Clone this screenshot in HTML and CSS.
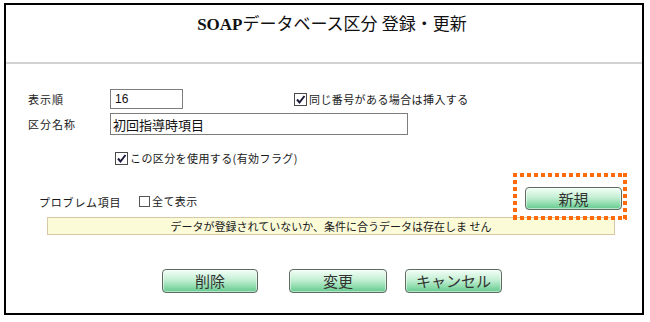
FILE: index.html
```html
<!DOCTYPE html>
<html lang="ja">
<head>
<meta charset="utf-8">
<title>SOAPデータベース区分 登録・更新</title>
<link rel="stylesheet" href="styles.css">
</head>
<body>
<div class="frame">
  <div class="header">
    <h1 class="title"><span class="title-en">SOAP</span>データベース区分 登録・更新</h1>
  </div>
  <div class="form">
    <div class="row row-order">
      <label class="label">表示順</label>
      <div class="field">
        <input class="input input-short" type="text" value="16">
        <span class="check check-insert"><span class="box checked"><svg viewBox="0 0 11 11" width="11" height="11"><path d="M2 5.5 L4.5 8.5 L9.5 2" fill="none" stroke="#1b1b3a" stroke-width="2"/></svg></span>同じ番号がある場合は挿入する</span>
      </div>
    </div>
    <div class="row row-name">
      <label class="label">区分名称</label>
      <div class="field">
        <input class="input input-long" type="text" value="初回指導時項目">
      </div>
    </div>
    <div class="row-flag">
      <span class="check"><span class="box checked"><svg viewBox="0 0 11 11" width="11" height="11"><path d="M2 5.5 L4.5 8.5 L9.5 2" fill="none" stroke="#1b1b3a" stroke-width="2"/></svg></span>この区分を使用する(有効フラグ)</span>
    </div>
    <div class="problem-row">
      <span class="problem-label">プロブレム項目</span>
      <span class="check check-all"><span class="box small"></span>全て表示</span>
      <span class="new-wrap">
        <button class="btn btn-new">新規</button>
        <span class="highlight"></span>
      </span>
    </div>
    <div class="message">データが登録されていないか、条件に合うデータは存在しま せん</div>
    <div class="actions">
      <button class="btn btn-delete">削除</button>
      <button class="btn btn-change">変更</button>
      <button class="btn btn-cancel">キャンセル</button>
    </div>
  </div>
</div>
</body>
</html>
```

FILE: styles.css
```css
* { box-sizing: border-box; }
html, body { margin: 0; padding: 0; background: #fff; }
body {
  font-family: "Noto Sans CJK JP", "Liberation Sans", sans-serif;
  color: #1a1a1a;
}
.frame {
  margin: 3px 0 0 4px;
  width: 640px;
  height: 312px;
  border: 2px solid #000;
}
.header {
  height: 59px;
  border-bottom: 2px solid #d2d2d2;
  display: flex;
  justify-content: center;
  padding: 10px 0 0 16px;
}
.title {
  margin: 0;
  font-size: 17px;
  line-height: 20px;
  font-weight: normal;
  font-family: "Liberation Serif", "Noto Sans CJK JP", serif;
  color: #111;
}
.title-en { font-weight: bold; }
.form {
  padding: 25px 20px 0 22px;
}
.row {
  display: grid;
  grid-template-columns: 82px 1fr;
  align-items: center;
}
.label {
  font-size: 11px;
  letter-spacing: 1px;
  line-height: 14px;
}
.field { display: flex; align-items: center; }
.row-order { height: 20px; }
.row-name { height: 22px; margin-top: 4px; }
.input {
  border: 1px solid #7d7d7d;
  background: #fff;
  padding: 0 4px;
  margin: 0;
  font-family: "Liberation Sans", "Noto Sans CJK JP", sans-serif;
  color: #111;
  outline: none;
}
.input-short { width: 73px; height: 20px; font-size: 12px; }
.input-long {
  width: 298px; height: 22px; font-size: 13px;
  font-family: "Noto Sans CJK JP", sans-serif;
  padding-left: 2px;
}
.check {
  display: inline-flex;
  align-items: center;
  font-size: 11px;
  letter-spacing: 0.4px;
  line-height: 14px;
  white-space: nowrap;
}
.box {
  width: 13px; height: 13px;
  border: 1px solid #4a4a4a;
  background: #fff;
  display: inline-flex;
  align-items: center;
  justify-content: center;
  margin-right: 2px;
}
.box.small { width: 11px; height: 11px; border-color: #555; margin-right: 2px; }
.check-insert { margin-left: 111px; }
.row-flag {
  margin-top: 15px;
  padding-left: 87px;
  height: 16px;
  display: flex;
  align-items: center;
}
.problem-row {
  margin-top: 21px;
  height: 23px;
  display: flex;
  align-items: flex-end;
}
.problem-label {
  margin-left: 11px;
  width: 100px;
  font-size: 11px;
  letter-spacing: 0.8px;
  line-height: 14px;
  position: relative;
  top: -1px;
}
.check-all { position: relative; top: -2px; }
.new-wrap {
  margin-left: auto;
  position: relative;
  display: block;
  height: 23px;
}
.btn {
  margin: 0;
  padding: 0;
  height: 24px;
  border: 1px solid #5f6a63;
  border-radius: 4px;
  background: linear-gradient(#f2fff6 0%, #c4efd4 45%, #8fdcad 75%, #63c98e 100%);
  font-family: "Noto Sans CJK JP", sans-serif;
  font-size: 15px;
  color: #333;
  line-height: 20px;
  box-shadow: inset 0 0 0 1px rgba(255,255,255,0.5);
}
.btn-new { width: 97px; height: 23px; display: block; }
.highlight {
  position: absolute;
  left: -12px;
  top: -14px;
  width: 114px;
  height: 47px;
  background:
    repeating-linear-gradient(90deg, #ff6a0c 0 4px, transparent 4px 7px) top left / 100% 4px no-repeat,
    repeating-linear-gradient(90deg, #ff6a0c 0 4px, transparent 4px 7px) bottom left / 100% 4px no-repeat,
    repeating-linear-gradient(180deg, #ff6a0c 0 4px, transparent 4px 7px) top left / 4px 100% no-repeat,
    repeating-linear-gradient(180deg, #ff6a0c 0 4px, transparent 4px 7px) top right / 4px 100% no-repeat;
  pointer-events: none;
}
.message {
  margin: 7px 0 0 19px;
  width: 568px;
  height: 18px;
  background: #fbfbd8;
  border: 1px solid #d8c9a6;
  font-size: 11px;
  letter-spacing: 0;
  line-height: 16px;
  text-align: center;
  color: #1a1a1a;
}
.actions {
  margin-top: 34px;
  padding-left: 134px;
  display: flex;
}
.btn-delete { width: 96px; }
.btn-change { width: 98px; margin-left: 31px; }
.btn-cancel { width: 97px; margin-left: 18px; }
```
